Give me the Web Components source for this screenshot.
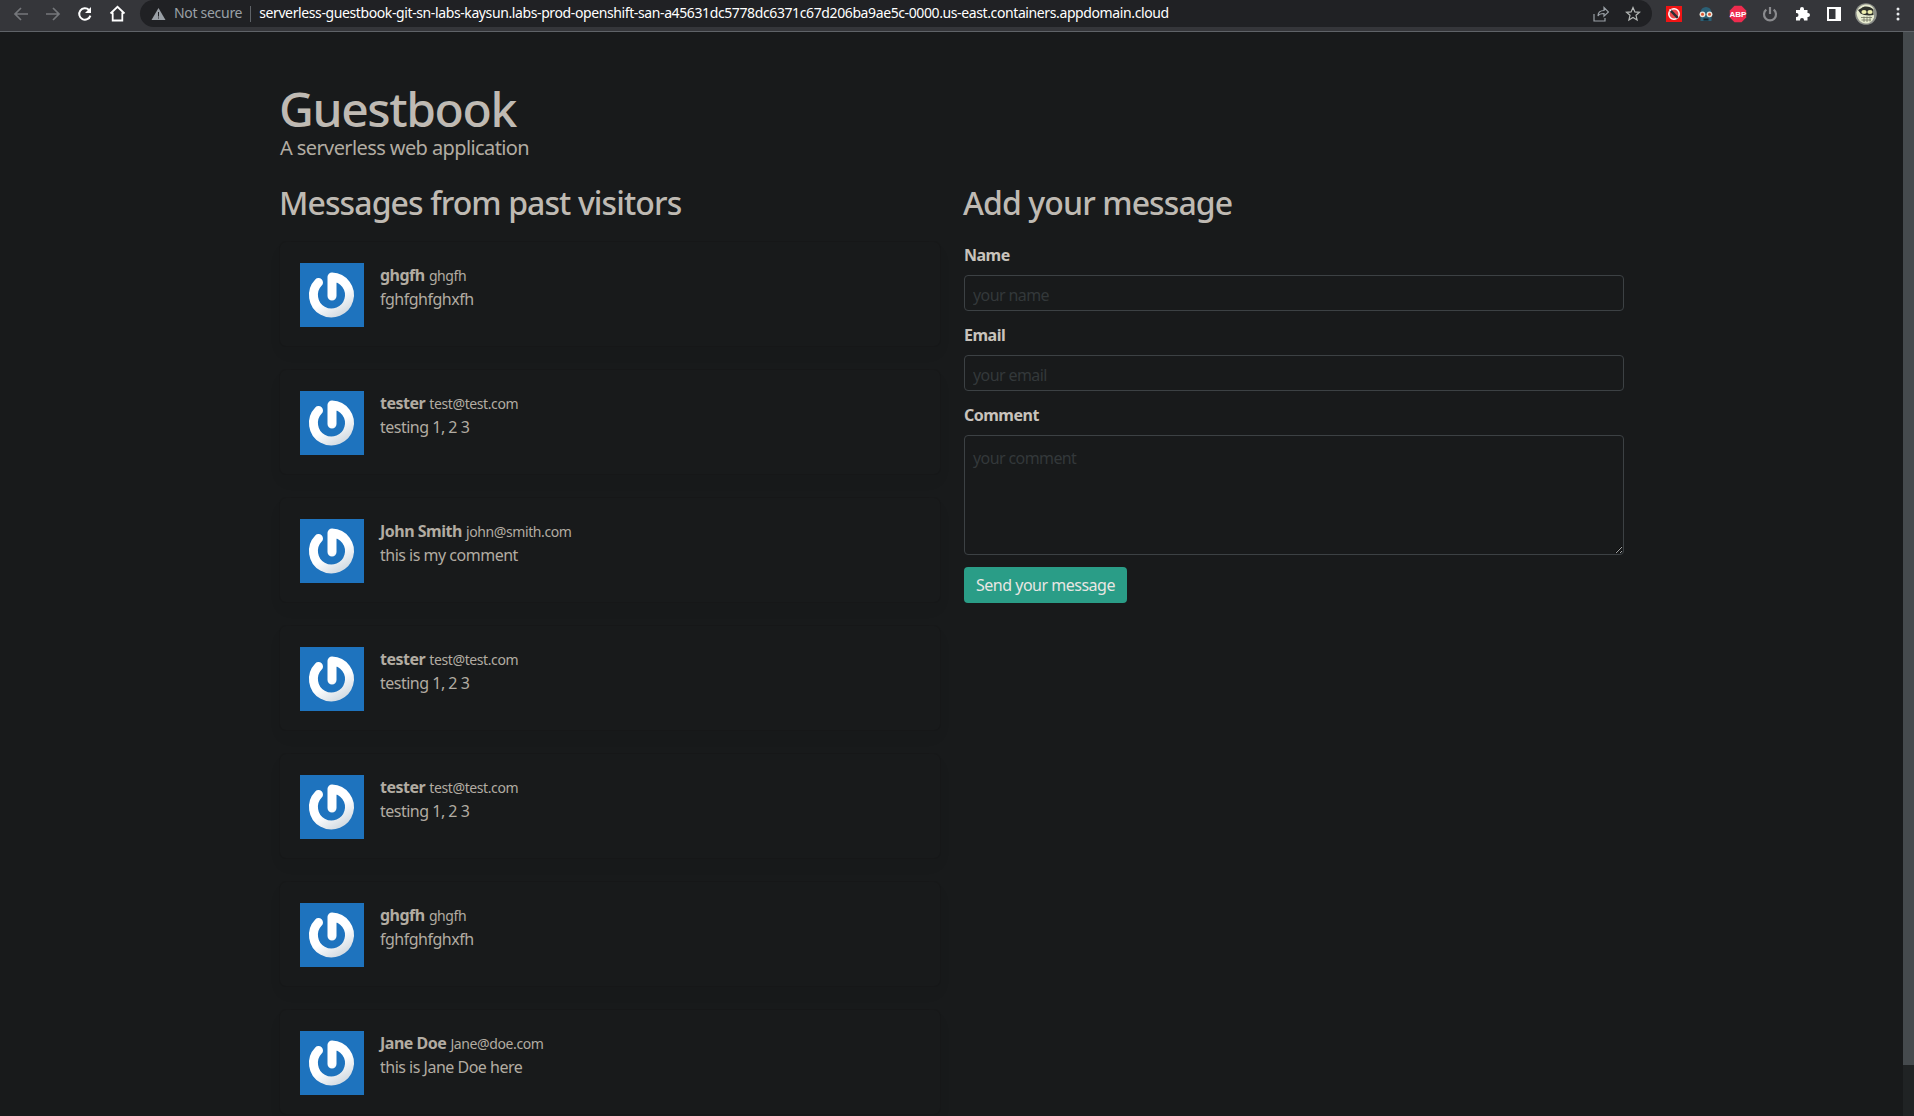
<!DOCTYPE html>
<html lang="en">
<head>
<meta charset="utf-8">
<title>Guestbook</title>
<style>
  html, body { margin: 0; height: 100%; overflow: hidden; background: #181a1b; }
</style>
</head>
<body>
<guestbook-app></guestbook-app>
<script>
const FONT = '"Noto Sans", "Open Sans", sans-serif';

class BrowserBar extends HTMLElement {
  constructor() {
    super();
    this.attachShadow({ mode: "open" });
  }

  connectedCallback() {
    this.shadowRoot.innerHTML = `
      <style>
        :host { display: flex; height: 31px; background: #35363a; border-bottom: 1px solid #5f6368; font-family: ${FONT}; }
        .slots { display: flex; }
        .nav { padding-left: 5px; }
        .slot { width: 32px; height: 27px; display: flex; align-items: center; justify-content: center; }
        svg { display: block; }
        .pill { flex: 1; height: 27px; margin: 0 6px 0 7px; padding-right: 3px; background: #202124; border-radius: 14px; display: flex; align-items: center; font-size: 14px; white-space: nowrap; }
        .warn { margin-left: 11px; }
        .secure { color: #9aa0a6; margin-left: 8px; letter-spacing: -0.3px; position: relative; top: -1px; }
        .sep { width: 1px; height: 16px; background: #5f6368; margin: 0 8px 0 8px; }
        .url { color: #fff; flex: 1; letter-spacing: -0.39px; position: relative; top: -1px; }
      </style>
      <div class="slots nav">
        <div class="slot"><svg width="16" height="16" viewBox="0 0 16 16" fill="none" stroke="#75777b" stroke-width="1.7"><path d="M15 8H2M8 2 2 8l6 6"/></svg></div>
        <div class="slot"><svg width="16" height="16" viewBox="0 0 16 16" fill="none" stroke="#75777b" stroke-width="1.7"><path d="M1 8h13M8 2l6 6-6 6"/></svg></div>
        <div class="slot"><svg width="16" height="16" viewBox="0 0 16 16" fill="none" stroke="#fff" stroke-width="2"><path d="M13.400 9.600A5.700 5.700 0 1 1 12 4"/><path d="M14 1v6H8z" fill="#fff" stroke="none"/></svg></div>
        <div class="slot"><svg width="17" height="17" viewBox="0 0 17 17" fill="none" stroke="#fff" stroke-width="1.800"><path d="M1.500 8.500 8.500 1.800l7 6.700M3.700 7.500v8h9.600v-8"/></svg></div>
      </div>
      <div class="pill">
        <svg class="warn" width="15" height="14" viewBox="0 0 15 14"><path d="M7.500 1 14.500 13H.5z" fill="#9aa0a6"/><path d="M7 5h1v4.500H7zM7 10.500h1v1H7z" fill="#202124"/></svg>
        <span class="secure">Not secure</span>
        <span class="sep"></span>
        <span class="url">serverless-guestbook-git-sn-labs-kaysun.labs-prod-openshift-san-a45631dc5778dc6371c67d206ba9ae5c-0000.us-east.containers.appdomain.cloud</span>
        <div class="slot"><svg width="16" height="16" viewBox="0 0 16 16" fill="none" stroke="#9aa0a6" stroke-width="1.2"><path d="M1 8v7h11v-3M5 10c0-4 3-5.500 6-5.500V1.500L15.500 6 11 10.200V7.500C8.500 7.500 6 8 5 10z"/></svg></div>
        <div class="slot"><svg width="16" height="16" viewBox="0 0 16 16" fill="none" stroke="#b4b7b5" stroke-width="1.200"><path d="m8 1.600 1.900 4.300 4.600.4-3.500 3 1.100 4.600L8 11.500l-4.100 2.400L5 9.300l-3.500-3 4.600-.4z"/></svg></div>
      </div>
      <div class="slots">
        <div class="slot"><svg width="16" height="16" viewBox="0 0 16 16"><rect width="16" height="16" fill="#f01414"/><circle cx="8" cy="8" r="5.200" fill="#e8484a" stroke="#fff" stroke-width="1.500"/><path d="M4.200 4.200l7.600 7.600" stroke="#2a2d33" stroke-width="2.400"/><path d="M3.500 3.500l1.500 1.500" stroke="#fff" stroke-width="1.400"/></svg></div>
        <div class="slot"><svg width="16" height="16" viewBox="0 0 16 16"><path d="M2.500 15V6.500a5.500 5.500 0 0 1 11 0V15z" fill="#2b6076"/><circle cx="4.500" cy="8.300" r="2.900" fill="#ece7dc"/><circle cx="11.500" cy="8.300" r="2.900" fill="#ece7dc"/><circle cx="4.500" cy="8.300" r="1.500" fill="#d8542f"/><circle cx="11.500" cy="8.300" r="1.500" fill="#d8542f"/><rect x="5.500" y="12.500" width="5" height="2" fill="#131f26"/></svg></div>
        <div class="slot"><svg width="18" height="18" viewBox="0 0 18 18"><path d="M5.500.8h7l4.700 4.700v7l-4.700 4.700h-7L.8 12.500v-7z" fill="#ee2c4e"/><text x="9" y="12" font-size="8" font-weight="700" fill="#fff" text-anchor="middle" font-family="Liberation Sans, sans-serif">ABP</text></svg></div>
        <div class="slot"><svg width="16" height="16" viewBox="0 0 16 16" fill="none" stroke="#8a8b8e" stroke-width="2.200"><path d="M4.300 3.700a6 6 0 1 0 7.400 0M8 1v7"/></svg></div>
        <div class="slot"><svg width="16" height="16" viewBox="0 0 16 16" fill="#fff"><path d="M6 3a2 2 0 0 1 4 0v1h3.500v3h.5a2 2 0 0 1 0 4h-.5v3.500H10V14a2 2 0 0 0-4 0v.5H2V11h.5a2 2 0 0 0 0-4H2V4h4z"/></svg></div>
        <div class="slot"><svg width="14" height="14" viewBox="0 0 14 14"><rect width="14" height="14" fill="#fff"/><rect x="2" y="2" width="6.500" height="10" fill="#35363a"/></svg></div>
        <div class="slot"><svg width="22" height="22" viewBox="0 0 22 22"><circle cx="11" cy="11" r="10.800" fill="#8d908a"/><path d="M1.500 9.500C3 4 7 1.500 11.500 1.500c4 0 6.500 2 7.500 5v8c-1.500 4-4.500 6-8 6-5 0-9-4-9.500-11z" fill="#e7ebcf"/><path d="M3 7c3-1 4-3.500 8-3.500 3 0 5.500 1 7.500 3v5.500c-4 1-10 .5-13-1.500z" fill="#2f322c"/><ellipse cx="9" cy="9" rx="2.600" ry="1.900" fill="#eeeeae"/><ellipse cx="15" cy="9" rx="2.600" ry="1.900" fill="#eeeeae"/><path d="M6 14.500h11M6.500 17h9.500M9 13.500v5.500M12 13.500v5.500M15 13.500v5" stroke="#6e725f" stroke-width="0.800" fill="none"/></svg></div>
        <div class="slot"><svg width="4" height="14" viewBox="0 0 4 14" fill="#e8eaed"><circle cx="2" cy="2" r="1.500"/><circle cx="2" cy="7" r="1.500"/><circle cx="2" cy="12" r="1.500"/></svg></div>
      </div>
    `;
  }
}

class MessageCard extends HTMLElement {
  constructor() {
    super();
    this.attachShadow({ mode: "open" });
  }

  connectedCallback() {
    const name = this.getAttribute("name") || "";
    const email = this.getAttribute("email") || "";
    this.shadowRoot.innerHTML = `
      <style>
        :host { display: flex; gap: 16px; padding: 21px 20px 19px; margin-bottom: 24px; height: 64px; border-radius: 6px; background: #181a1b; box-shadow: rgba(8,9,10,.05) 0 8px 16px -2px, rgba(8,9,10,.08) 0 0 0 1px; color: #b2aca2; font-size: 16px; line-height: 24px; }
        svg { display: block; flex: none; }
        strong { font-weight: 700; letter-spacing: -0.5px; }
        small { font-size: 14px; letter-spacing: -0.4px; }
        .comment { letter-spacing: -0.5px; margin-top: -1px; }
      </style>
      <svg width="64" height="64" viewBox="0 0 64 64">
        <defs>
          <linearGradient id="ring" x1="0.2" y1="0" x2="0.8" y2="1">
            <stop offset="0.55" stop-color="#ffffff"/>
            <stop offset="1" stop-color="#d5dde4"/>
          </linearGradient>
        </defs>
        <rect width="64" height="64" fill="#1e73be"/>
        <path d="M18.500 19.500A18 18 0 1 0 32 14V33" fill="none" stroke="url(#ring)" stroke-width="9" stroke-linecap="round" stroke-linejoin="round"/>
      </svg>
      <div>
        <div><strong>${name}</strong> <small>${email}</small></div>
        <div class="comment"><slot></slot></div>
      </div>
    `;
  }
}

class FormField extends HTMLElement {
  constructor() {
    super();
    this.attachShadow({ mode: "open" });
  }

  connectedCallback() {
    const label = this.getAttribute("label");
    const placeholder = this.getAttribute("placeholder");
    const control = this.hasAttribute("multiline")
      ? `<textarea placeholder="${placeholder}"></textarea>`
      : `<input type="text" placeholder="${placeholder}">`;
    this.shadowRoot.innerHTML = `
      <style>
        :host { display: block; margin-bottom: 12px; color: #c8c3bc; }
        label { display: block; font-weight: 700; font-size: 16px; line-height: 24px; margin-bottom: 8px; letter-spacing: -0.5px; }
        input, textarea { display: block; width: 100%; box-sizing: border-box; margin: 0; background: #181a1b; border: 1px solid #3c4144; border-radius: 4px; color: #c8c3bc; font-family: ${FONT}; font-size: 16px; letter-spacing: -0.6px; outline: none; }
        input { height: 36px; padding: 3px 8px 0; }
        textarea { height: 120px; padding: 10px 8px 6px; resize: vertical; line-height: 24px; }
        ::placeholder { color: #33383a; opacity: 1; }
      </style>
      <label>${label}</label>
      ${control}
    `;
  }
}

class MessageForm extends HTMLElement {
  constructor() {
    super();
    this.attachShadow({ mode: "open" });
  }

  connectedCallback() {
    this.shadowRoot.innerHTML = `
      <style>
        :host { display: block; }
        button { display: block; height: 36px; width: 163px; padding: 0; background: #2a9d87; border: none; border-radius: 4px; color: #e8e6e3; font-family: ${FONT}; font-size: 16px; letter-spacing: -0.5px; }
      </style>
      <form-field label="Name" placeholder="your name"></form-field>
      <form-field label="Email" placeholder="your email"></form-field>
      <form-field label="Comment" placeholder="your comment" multiline></form-field>
      <button type="button">Send your message</button>
    `;
  }
}

class GuestbookApp extends HTMLElement {
  constructor() {
    super();
    this.attachShadow({ mode: "open" });
  }

  connectedCallback() {
    this.shadowRoot.innerHTML = `
      <style>
        :host { display: flex; flex-direction: column; height: 100vh; overflow: hidden; background: #181a1b; color: #b2aca2; font-family: ${FONT}; }
        .view { flex: 1; display: flex; min-height: 0; }
        main { flex: 1; padding: 0 280px; overflow: hidden; box-sizing: border-box; min-width: 0; }
        header { padding-top: 48px; }
        h1 { margin: 0 0 1px -1px; font-size: 48px; line-height: 58px; font-weight: 500; letter-spacing: -1.4px; color: #bfbab3; }
        .sub { font-size: 20px; line-height: 18px; letter-spacing: -0.6px; }
        .columns { display: grid; grid-template-columns: 660px 660px; column-gap: 24px; margin-top: 22px; }
        h2 { margin: 0 0 15px -1px; font-size: 32px; line-height: 48px; font-weight: 500; letter-spacing: -0.9px; color: #bfbab3; }
        .right h2 { margin-bottom: 16px; }
        .scrollbar { width: 11px; background: #202324; flex: none; }
        .thumb { height: 1033px; background: #454a4d; }
      </style>
      <browser-bar></browser-bar>
      <div class="view">
        <main>
          <header>
            <h1>Guestbook</h1>
            <div class="sub">A serverless web application</div>
          </header>
          <div class="columns">
            <section>
              <h2>Messages from past visitors</h2>
              <message-card name="ghgfh" email="ghgfh">fghfghfghxfh</message-card>
              <message-card name="tester" email="test@test.com">testing 1, 2 3</message-card>
              <message-card name="John Smith" email="john@smith.com">this is my comment</message-card>
              <message-card name="tester" email="test@test.com">testing 1, 2 3</message-card>
              <message-card name="tester" email="test@test.com">testing 1, 2 3</message-card>
              <message-card name="ghgfh" email="ghgfh">fghfghfghxfh</message-card>
              <message-card name="Jane Doe" email="Jane@doe.com">this is Jane Doe here</message-card>
            </section>
            <section class="right">
              <h2>Add your message</h2>
              <message-form></message-form>
            </section>
          </div>
        </main>
        <div class="scrollbar"><div class="thumb"></div></div>
      </div>
    `;
  }
}

customElements.define("browser-bar", BrowserBar);
customElements.define("message-card", MessageCard);
customElements.define("form-field", FormField);
customElements.define("message-form", MessageForm);
customElements.define("guestbook-app", GuestbookApp);
</script>
</body>
</html>
